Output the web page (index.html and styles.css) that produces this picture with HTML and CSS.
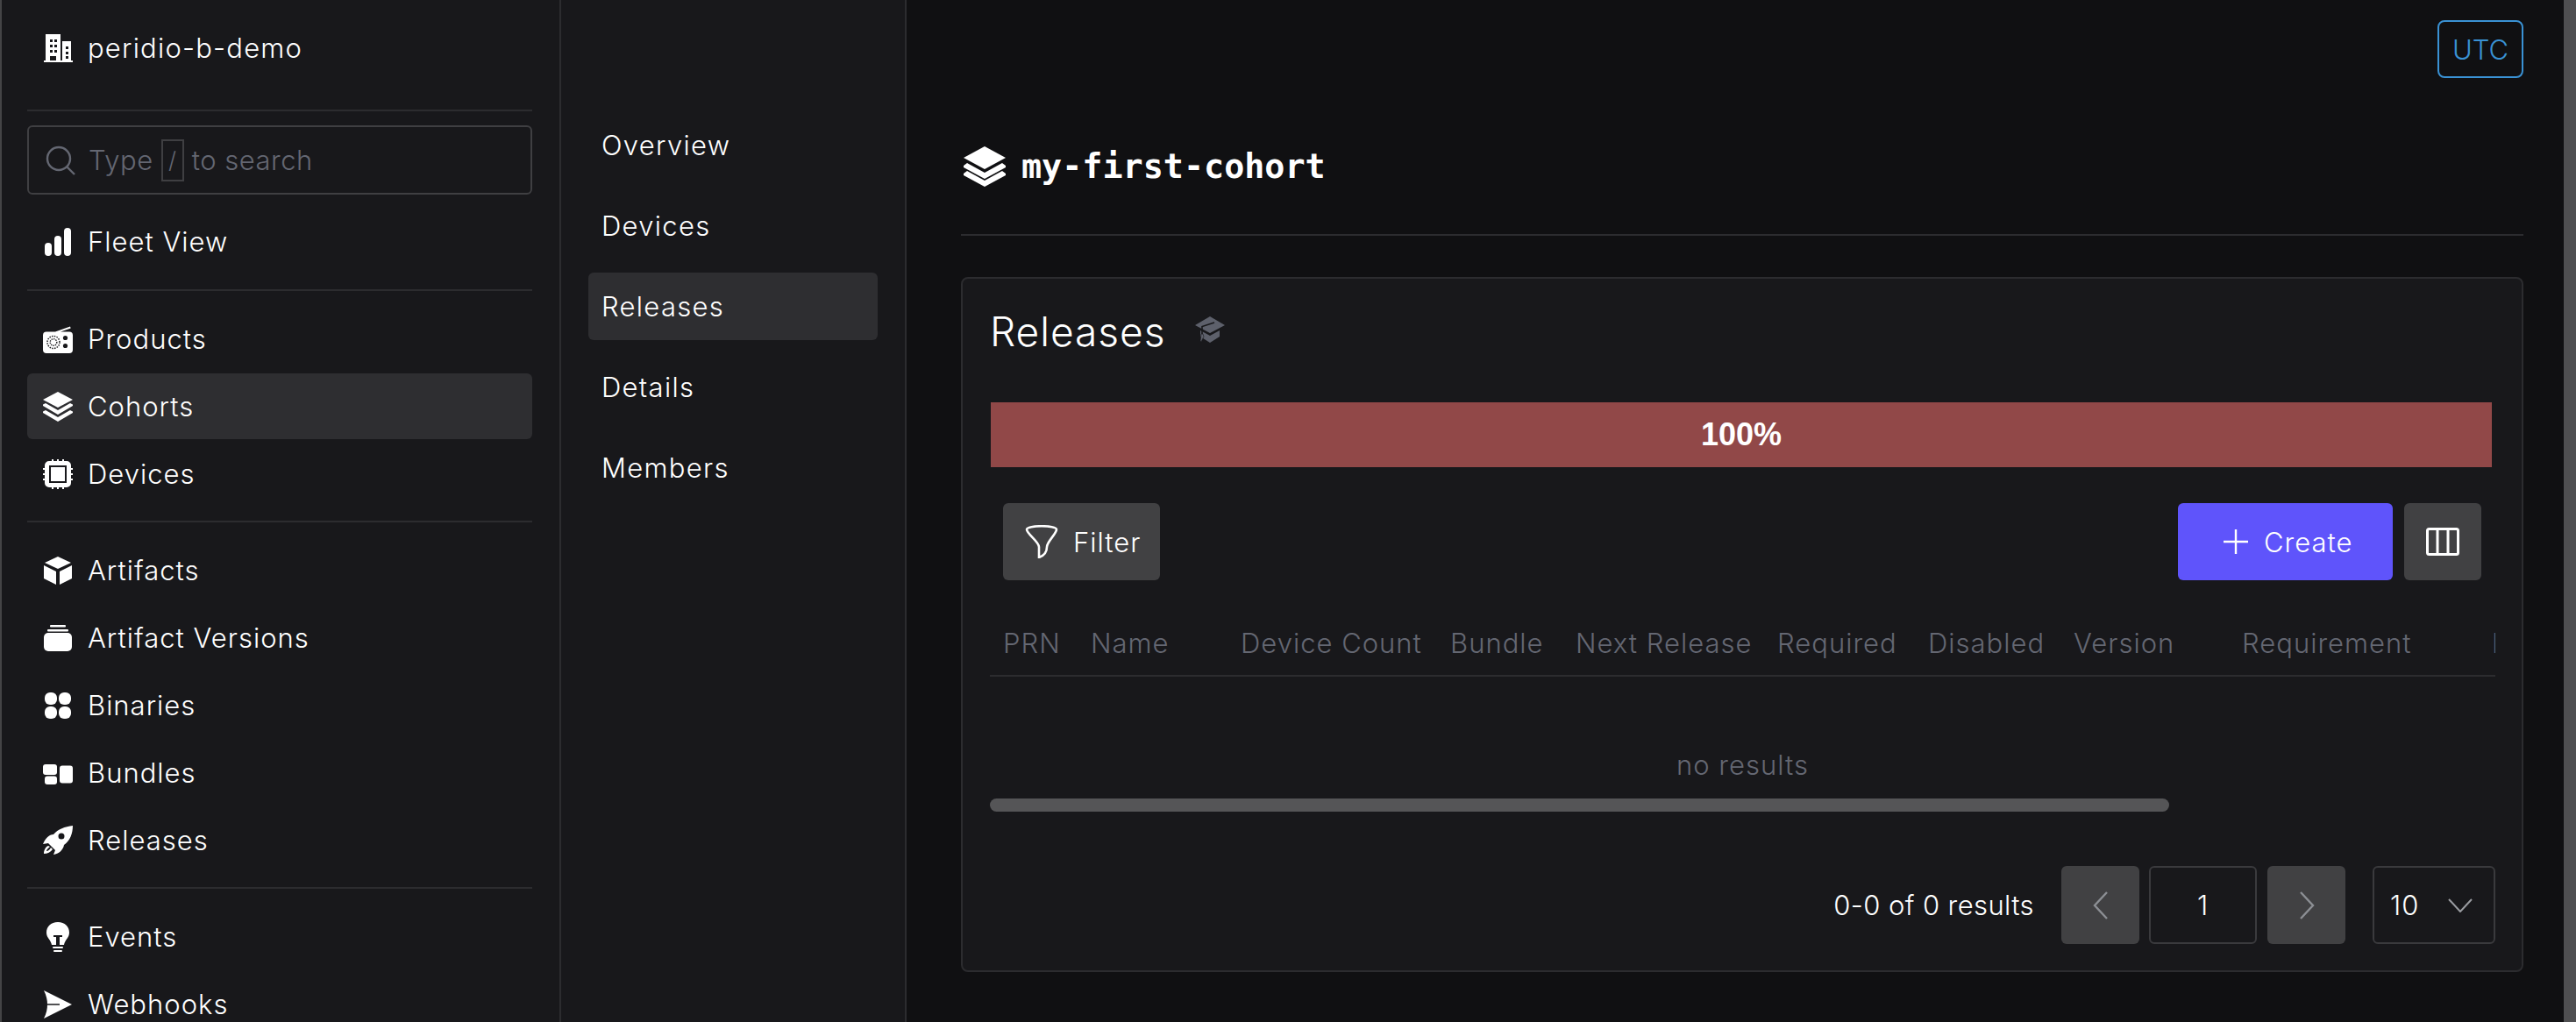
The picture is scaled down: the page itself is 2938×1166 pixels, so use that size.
FILE: index.html
```html
<!DOCTYPE html>
<html lang="en">
<head>
    <meta charset="UTF-8">
    <title>my-first-cohort</title>
    <link rel="stylesheet" href="styles.css">
</head>
<body>
    <aside class="sidebar">
        <div class="org">
            <svg class="icon" viewBox="0 0 34 34"><path fill-rule="evenodd" d="M1 33v-2h2V1h17v30h2v2H1zM8 7v3h3V7H8zm5 0v3h3V7h-3zM8 13v3h3v-3H8zm5 0v3h3v-3h-3zM8 19v3h3v-3H8zm5 0v3h3v-3h-3zM8 26v5h7v-5H8z"/><path fill-rule="evenodd" d="M22 9h10v22h2v2H22V9zm4 6v3h3v-3h-3zm0 6v3h3v-3h-3zm0 5v3h3v-3h-3z"/></svg>
            <span>peridio-b-demo</span>
        </div>
        <div class="search">
            <svg class="search-icon" viewBox="0 0 34 34" fill="none" stroke="currentColor" stroke-width="2.4"><circle cx="15" cy="15" r="13"/><path d="M24 24l9 9"/></svg>
            <span>Type</span><kbd>/</kbd><span>to search</span>
        </div>
        <nav>
            <div class="nav-group">
                <a class="nav-item"><svg class="icon" viewBox="0 0 34 34"><rect x="2" y="18" width="8" height="15" rx="4"/><rect x="13" y="10" width="8" height="23" rx="4"/><rect x="24" y="1" width="8" height="32" rx="4"/></svg>Fleet View</a>
            </div>
            <div class="nav-group">
                <a class="nav-item"><svg class="icon" viewBox="0 0 34 34"><path d="M14 8.500L31 2.500l.7 2L20 8.500h10a4 4 0 0 1 4 4V29a4 4 0 0 1-4 4H4a4 4 0 0 1-4-4V12.500a4 4 0 0 1 4-4z"/><circle cx="25.500" cy="15.500" r="2.600" fill="#18181b"/><circle cx="25.500" cy="24.500" r="2.600" fill="#18181b"/><circle cx="12" cy="20.500" r="7" fill="none" stroke="#18181b" stroke-width="1.500" stroke-dasharray="1.500 1.300"/><circle cx="12" cy="20.500" r="3.800" fill="none" stroke="#18181b" stroke-width="1.400" stroke-dasharray="1.400 1.100"/></svg>Products</a>
                <a class="nav-item active"><svg class="icon" viewBox="0 0 34 34"><path d="M17 0l17 9-17 9L0 9z"/><path d="M3 13l14 8 14-8 3 1.500v1.500L17 26 0 16v-1.500z"/><path d="M3 21l14 8 14-8 3 1.500V24L17 34 0 24v-1.500z"/></svg>Cohorts</a>
                <a class="nav-item"><svg class="icon" viewBox="0 0 34 34"><path fill-rule="evenodd" d="M7 2h20a5 5 0 0 1 5 5v20a5 5 0 0 1-5 5H7a5 5 0 0 1-5-5V7a5 5 0 0 1 5-5zm0 5v20h20V7H7z"/><path d="M9 9h16v16H9zM10 0h2v3h-2zM16 0h2v3h-2zM22 0h2v3h-2zM10 31h2v3h-2zM16 31h2v3h-2zM22 31h2v3h-2zM0 10h3v2H0zM0 16h3v2H0zM0 22h3v2H0zM31 10h3v2h-3zM31 16h3v2h-3zM31 22h3v2h-3z"/></svg>Devices</a>
            </div>
            <div class="nav-group">
                <a class="nav-item"><svg class="icon" viewBox="0 0 34 34"><path d="M17 1l15 7-15 7L2 8z"/><path d="M1 11l14 7v15L1 26z"/><path d="M33 11l-14 7v15l14-7z"/></svg>Artifacts</a>
                <a class="nav-item"><svg class="icon" viewBox="0 0 34 34"><rect x="1" y="11" width="32" height="21" rx="5"/><rect x="5" y="7" width="24" height="2.500" rx="1"/><rect x="8" y="2" width="18" height="2.500" rx="1"/></svg>Artifact Versions</a>
                <a class="nav-item"><svg class="icon" viewBox="0 0 34 34"><rect x="2" y="2" width="14" height="14" rx="6"/><rect x="18" y="2" width="14" height="14" rx="6"/><rect x="2" y="18" width="14" height="14" rx="6"/><rect x="18" y="18" width="14" height="14" rx="6"/></svg>Binaries</a>
                <a class="nav-item"><svg class="icon" viewBox="0 0 34 34"><rect x="0" y="7" width="16" height="12" rx="3"/><rect x="2" y="20.500" width="14" height="9.500" rx="3"/><rect x="19" y="8.500" width="15" height="20" rx="3"/></svg>Bundles</a>
                <a class="nav-item"><svg class="icon" viewBox="0 0 34 34"><path fill-rule="evenodd" d="M34 0C25 1 17 4 12 10 7 10 3 14 0 21l6-1 8 8-2 5c6-1 11-5 12-11 7-5 10-13 10-22zM21 8.500a3.500 3.500 0 1 1 0 7 3.500 3.500 0 0 1 0-7z"/><path d="M6 23c-3 1-5 5-5 9 4 0 8-2 10-5l-2-2c-1 2-3 4-5 4 0-2 2-3 4-5z"/></svg>Releases</a>
            </div>
            <div class="nav-group">
                <a class="nav-item"><svg class="icon" viewBox="0 0 34 34"><path d="M17 0C9 0 4 5 4 12c0 6 5 8 6 14h5V17h-3v-2h10v2h-3v9h5c1-6 6-8 6-14 0-7-5-12-13-12z"/><rect x="11" y="28" width="12" height="2" rx="1"/><rect x="12" y="32" width="10" height="2" rx="1"/></svg>Events</a>
                <a class="nav-item"><svg class="icon" viewBox="0 0 34 34"><path fill-rule="evenodd" d="M1 1l32 16L1 33c3-6 4-11 4-16S4 7 1 1zm4 15.200v1.600h14v-1.600H5z"/></svg>Webhooks</a>
            </div>
        </nav>
    </aside>

    <nav class="subnav">
        <a class="subnav-item">Overview</a>
        <a class="subnav-item">Devices</a>
        <a class="subnav-item active">Releases</a>
        <a class="subnav-item">Details</a>
        <a class="subnav-item">Members</a>
    </nav>

    <main class="main">
        <div class="topbar"><span class="utc">UTC</span></div>
        <header class="page-title">
            <svg class="title-icon" viewBox="0 0 48 46"><path d="M24 0l24 13-24 13L0 13z"/><path d="M4 19l20 11 20-11 4 3v2L24 37 0 24v-2z"/><path d="M4 28l20 11 20-11 4 3v2L24 46 0 33v-2z"/></svg>
            <h1>my-first-cohort</h1>
        </header>

        <section class="card">
            <div class="card-head">
                <h2>Releases</h2>
                <svg class="learn-icon" viewBox="0 0 34 30"><path d="M17 0l17 10-17 9L0 10z"/><path d="M6 16l11 6 11-6v7l-11 7-11-7z"/><path d="M22 7L8 11.500V21" fill="none" stroke="#18181b" stroke-width="1.600"/><path d="M7 20h2l1 3-3 6-1-1z" stroke="#18181b" stroke-width="0.600"/></svg>
            </div>
            <div class="usage-bar">100%</div>
            <div class="toolbar">
                <button class="btn btn-gray">
                    <svg class="btn-icon" viewBox="0 0 38 38" fill="none" stroke="#fff" stroke-width="2.600"><path d="M2 5c0-5 34-5 34 0 0 5-11 14-11 20 0 4-1 9-9 12V25C16 19 2 10 2 5z"/></svg>
                    Filter
                </button>
                <div class="toolbar-right">
                    <button class="btn btn-primary">
                        <svg class="plus-icon" viewBox="0 0 28 28" stroke="#fff" stroke-width="2.400"><path d="M14 0v28M0 14h28"/></svg>
                        Create
                    </button>
                    <button class="btn btn-gray btn-columns">
                        <svg class="columns-icon" viewBox="0 0 38 32" fill="none" stroke="#fff" stroke-width="3"><rect x="1.500" y="1.500" width="35" height="29" rx="2"/><path d="M13 1.500v29M25 1.500v29"/></svg>
                    </button>
                </div>
            </div>
            <div class="table">
                <div class="table-head">
                    <span>PRN</span><span>Name</span><span>Device Count</span><span>Bundle</span><span>Next Release</span><span>Required</span><span>Disabled</span><span>Version</span><span>Requirement</span><span>ID</span>
                </div>
                <div class="no-results">no results</div>
                <div class="scroll-track"><div class="scroll-thumb"></div></div>
            </div>
            <div class="pagination">
                <span class="page-count">0-0 of 0 results</span>
                <button class="page-btn"><svg viewBox="0 0 18 32" fill="none" stroke="#8c8f94" stroke-width="2.400"><path d="M16 1L2 16l14 15"/></svg></button>
                <div class="page-input">1</div>
                <button class="page-btn"><svg viewBox="0 0 18 32" fill="none" stroke="#8c8f94" stroke-width="2.400"><path d="M2 1l14 15L2 31"/></svg></button>
                <div class="page-size">10<svg viewBox="0 0 28 16" fill="none" stroke="#9a9ca1" stroke-width="2"><path d="M1 1l13 14L27 1"/></svg></div>
            </div>
        </section>
    </main>

    <div class="scrollbar"></div>
</body>
</html>
```

FILE: styles.css
```css
* {
    box-sizing: border-box;
}

html, body {
    height: 100%;
}

body {
    margin: 0;
    display: flex;
    height: 1166px;
    overflow: hidden;
    background-color: #101012;
    color: #fff;
    fill: currentColor;
    font-family: Inter, "Noto Sans", sans-serif;
    font-weight: 300;
    font-size: 31px;
    letter-spacing: 1px;
}

svg {
    display: block;
    flex: none;
}

button {
    font: inherit;
    letter-spacing: inherit;
    color: inherit;
    border: 0;
}

/* left sidebar */
.sidebar {
    width: 640px;
    flex: none;
    padding: 0 31px 0 29px;
    background-color: #18181b;
    border-left: 2px solid #444446;
    border-right: 2px solid #2c2c2f;
    overflow: hidden;
}

.org {
    height: 127px;
    display: flex;
    align-items: center;
    gap: 17px;
    padding: 0 0 16px 18px;
    border-bottom: 2px solid #2c2c2f;
    letter-spacing: 1.2px;
}

.icon {
    width: 34px;
    height: 34px;
}

.search {
    height: 79px;
    margin-top: 16px;
    display: flex;
    align-items: center;
    gap: 9px;
    padding-left: 19px;
    border: 2px solid #3f3f42;
    border-radius: 6px;
    color: #646772;
    letter-spacing: 0.5px;
}

.search-icon {
    width: 34px;
    height: 34px;
    margin-right: 6px;
}

.search kbd {
    width: 26px;
    height: 48px;
    display: flex;
    align-items: center;
    justify-content: center;
    border: 2px solid #3f3f42;
    font: inherit;
    font-size: 26px;
}

.nav-group {
    display: flex;
    flex-direction: column;
    gap: 2px;
    padding: 17px 0 16px;
    border-bottom: 2px solid #2c2c2f;
}

.nav-group:first-child {
    padding: 16px 0 17px;
}

.nav-group:last-child {
    border-bottom: 0;
}

.nav-item {
    height: 75px;
    display: flex;
    align-items: center;
    gap: 17px;
    padding-left: 18px;
    border-radius: 6px;
}

.nav-item.active {
    background-color: #2e2e31;
}

/* second column */
.subnav {
    width: 394px;
    flex: none;
    padding: 127px 31px 0;
    display: flex;
    flex-direction: column;
    gap: 15px;
    background-color: #18181b;
    border-right: 2px solid #2c2c2f;
    letter-spacing: 1.3px;
}

.subnav-item {
    height: 77px;
    display: flex;
    align-items: center;
    padding-left: 15px;
    border-radius: 6px;
}

.subnav-item.active {
    background-color: #2e2e31;
}

/* main content */
.main {
    flex: 1;
    min-width: 0;
    padding: 23px 46px 0 62px;
}

.topbar {
    display: flex;
    justify-content: flex-end;
}

.utc {
    width: 98px;
    height: 66px;
    display: flex;
    align-items: center;
    justify-content: center;
    border: 2px solid #3a92d4;
    border-radius: 8px;
    color: #3a92d4;
    letter-spacing: 0;
}

.page-title {
    margin-top: 78px;
    height: 102px;
    display: flex;
    gap: 18px;
    padding-left: 3px;
    border-bottom: 2px solid #2c2c2f;
}

.title-icon {
    width: 48px;
    height: 46px;
}

.page-title h1 {
    margin: 0;
    height: 46px;
    line-height: 46px;
    font-family: "DejaVu Sans Mono", monospace;
    font-weight: 700;
    font-size: 38.4px;
    letter-spacing: 0;
}

.card {
    margin-top: 47px;
    height: 793px;
    padding: 0 34px 0 32px;
    background-color: #18181b;
    border: 2px solid #2c2c2f;
    border-radius: 8px;
}

.card-head {
    height: 141px;
    padding-bottom: 21px;
    display: flex;
    align-items: center;
    gap: 33px;
}

.card-head h2 {
    margin: 0 0 0 -1px;
    font-weight: 300;
    font-size: 46px;
    letter-spacing: 1px;
}

.learn-icon {
    width: 34px;
    height: 30px;
    margin-bottom: 4px;
    color: #5d606b;
}

.usage-bar {
    height: 74px;
    display: flex;
    align-items: center;
    justify-content: center;
    background-color: #914848;
    font-family: "Liberation Sans", Arial, sans-serif;
    font-weight: 700;
    font-size: 36px;
    letter-spacing: 0;
}

.toolbar {
    margin-top: 41px;
    padding: 0 12px 0 14px;
    display: flex;
    justify-content: space-between;
}

.toolbar-right {
    display: flex;
    gap: 13px;
}

.btn {
    height: 88px;
    display: flex;
    align-items: center;
    border-radius: 6px;
}

.btn-gray {
    width: 179px;
    gap: 17px;
    padding-left: 25px;
    background-color: #414143;
}

.btn-primary {
    width: 245px;
    gap: 18px;
    padding-left: 52px;
    background-color: #5f54fb;
}

.btn-columns {
    width: 88px;
    padding-left: 25px;
}

.btn-icon {
    width: 38px;
    height: 38px;
}

.plus-icon {
    width: 28px;
    height: 28px;
}

.columns-icon {
    width: 38px;
    height: 32px;
}

.table {
    margin: 0 -4px 0 -1px;
    overflow: hidden;
}

.table-head {
    height: 110px;
    padding-top: 34px;
    display: grid;
    grid-template-columns: 100px 171px 239px 143px 230px 172px 166px 192px 285px 100px;
    align-items: center;
    border-bottom: 2px solid #2c2c2f;
    color: #646772;
    white-space: nowrap;
}

.table-head span {
    padding-left: 15px;
}

.no-results {
    height: 139px;
    padding-top: 61px;
    display: flex;
    align-items: center;
    justify-content: center;
    color: #646772;
}

.scroll-track {
    height: 15px;
}

.scroll-thumb {
    width: 1345px;
    height: 15px;
    background-color: #555557;
    border-radius: 8px;
}

.pagination {
    margin: 62px -4px 0 0;
    display: flex;
    justify-content: flex-end;
    align-items: center;
}

.page-count {
    margin-right: 31px;
    letter-spacing: 0.4px;
}

.page-btn {
    width: 89px;
    height: 89px;
    display: flex;
    align-items: center;
    justify-content: center;
    background-color: #414143;
    border-radius: 6px;
}

.page-btn svg {
    width: 18px;
    height: 32px;
}

.page-input {
    width: 123px;
    height: 89px;
    margin: 0 12px 0 11px;
    display: flex;
    align-items: center;
    justify-content: center;
    border: 2px solid #3a3a3d;
    border-radius: 6px;
}

.page-size {
    width: 140px;
    height: 89px;
    margin-left: 31px;
    padding: 0 24px 0 18px;
    display: flex;
    align-items: center;
    justify-content: space-between;
    border: 2px solid #3a3a3d;
    border-radius: 6px;
}

.page-size svg {
    width: 28px;
    height: 16px;
}

.scrollbar {
    width: 14px;
    flex: none;
    background-color: #4f4f51;
}
```
